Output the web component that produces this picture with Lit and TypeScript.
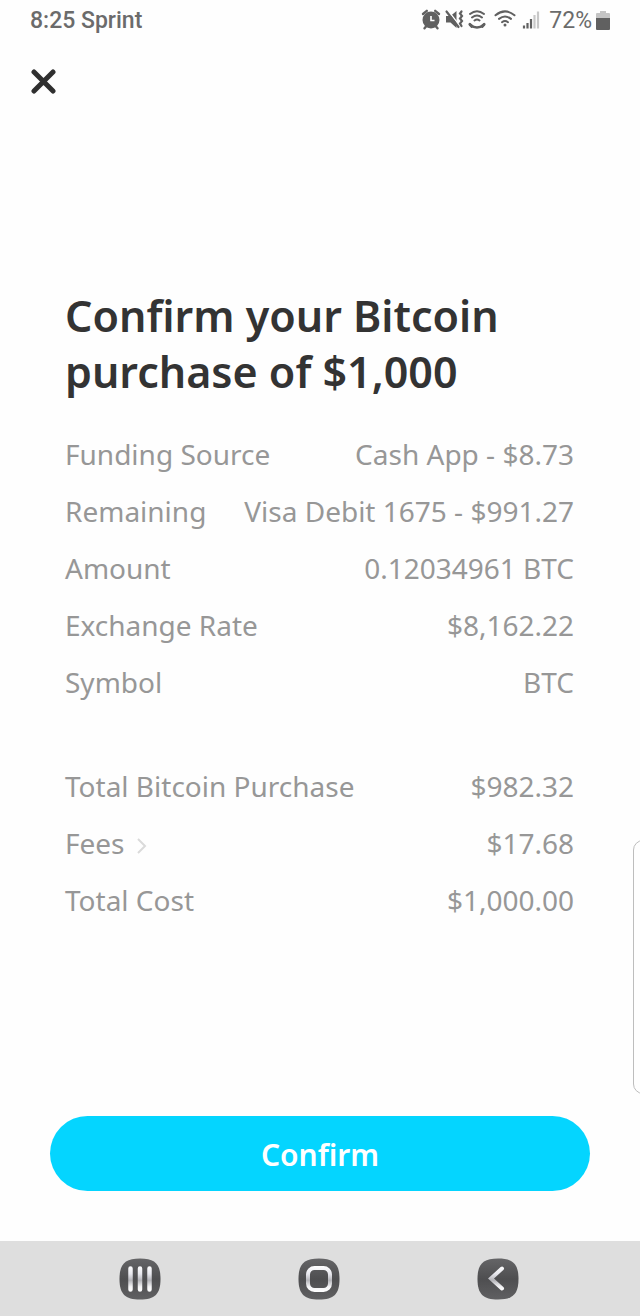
import { LitElement, html, css, svg } from "lit";
import { customElement, property } from "lit/decorators.js";

interface Row {
  label: string;
  value: string;
  link?: boolean;
}

const ORDER_ROWS: Row[] = [
  { label: "Funding Source", value: "Cash App - $8.73" },
  { label: "Remaining", value: "Visa Debit 1675 - $991.27" },
  { label: "Amount", value: "0.12034961 BTC" },
  { label: "Exchange Rate", value: "$8,162.22" },
  { label: "Symbol", value: "BTC" },
];

const TOTAL_ROWS: Row[] = [
  { label: "Total Bitcoin Purchase", value: "$982.32" },
  { label: "Fees", value: "$17.68", link: true },
  { label: "Total Cost", value: "$1,000.00" },
];

@customElement("status-bar")
export class StatusBar extends LitElement {
  static styles = css`
    :host {
      display: flex;
      justify-content: space-between;
      align-items: center;
      height: 41px;
      padding: 0 30px;
      font: 500 23px/27px Roboto, sans-serif;
      color: #6b6b6b;
    }
    .icons {
      display: flex;
      align-items: center;
    }
    .glyphs {
      display: block;
      margin-right: 9px;
    }
    .battery {
      display: block;
      margin-left: 4px;
    }
    .level {
      font-weight: 400;
    }
  `;

  render() {
    return html`
      <span>8:25 Sprint</span>
      <div class="icons">
        <svg class="glyphs" width="120" height="24" viewBox="420 8 120 24" fill="none" stroke="#606060" stroke-width="2" stroke-linecap="round" aria-hidden="true">
          <circle cx="431" cy="19" r="7.500" fill="#606060" />
          <path d="M423 13l3.800-3.200M439 13l-3.800-3.200M426 25.500l-1.500 1.800M436 25.500l1.500 1.800" stroke-width="2.400" />
          <path d="M431 15v4.500h3.500" stroke="#fff" stroke-width="1.600" stroke-linecap="butt" />
          <path d="M446 15h4.500l6-5v17l-6-5.500H446z" fill="#606060" stroke="none" />
          <path d="M448 9.500l11.500 15" stroke="#fff" stroke-width="1.400" />
          <path d="M446.500 10.500l12 15.500" stroke-width="2.200" />
          <path d="M461.500 10.500l-1.500 2 2 2.500-2 2.500 2 2.500-2 2.500 1.500 2.500" stroke-width="2.200" />
          <path d="M470 13q7-5.500 14 0M472 16.500q5-4 10 0M474.500 19.500q2.500-2 5 0" stroke-width="2" />
          <path d="M470.500 24q6.500 5 13 0" stroke-width="2.600" />
          <path d="M469.800 23.300l2 2.200M484.200 23.300l-2 2.200" stroke-width="2.800" />
          <path d="M495.500 14.300q9.500-7.800 19 0M499 17.900q6-4.800 12 0M502 21.200q3-2.300 6 0" />
          <circle cx="505" cy="24" r="1.500" fill="#606060" stroke="none" />
          <g stroke-linecap="butt">
            <path d="M524 24.500v3M527.500 22v5.500M531 18v9.500" stroke-width="2.200" />
            <path d="M534.500 14v13.500M538 10.500v17" stroke="#c8c8c8" stroke-width="2.200" />
          </g>
        </svg>
        <span class="level">72%</span>
        <svg class="battery" width="14" height="20" viewBox="0 0 14 20" aria-hidden="true">
          <path d="M4 0h6v2h3q1 0 1 1v5H0V3q0-1 1-1h3z" fill="#c4c4c4" />
          <path d="M0 7h14v11q0 1-1 1H1q-1 0-1-1z" fill="#606060" />
        </svg>
      </div>
    `;
  }
}

@customElement("detail-list")
export class DetailList extends LitElement {
  @property({ attribute: false }) rows: Row[] = [];

  static styles = css`
    :host {
      display: block;
    }
    .list {
      margin: 0;
      display: grid;
      gap: 21px;
    }
    .row {
      display: flex;
      justify-content: space-between;
      line-height: 36px;
    }
    .value {
      margin: 0;
      text-align: right;
    }
    .more {
      color: inherit;
      text-decoration: none;
    }
    .chevron {
      margin-left: 11px;
    }
  `;

  render() {
    return html`
      <dl class="list">
        ${this.rows.map(
          (row) => html`
            <div class="row">
              <dt>
                ${row.link
                  ? html`<a class="more" href="#fees">${row.label}<svg class="chevron" width="12" height="16" viewBox="0 0 12 16" aria-hidden="true"><path d="M2 1l7 7-7 7" fill="none" stroke="#dadada" stroke-width="2" /></svg></a>`
                  : row.label}
              </dt>
              <dd class="value">${row.value}</dd>
            </div>
          `
        )}
      </dl>
    `;
  }
}

const NAV_ITEMS = [
  {
    label: "Recent apps",
    glyph: svg`<path d="M11.500 10.500v21M21 10.500v21M30.500 10.500v21" stroke="url(#metal)" stroke-width="4.500" stroke-linecap="round" />`,
  },
  {
    label: "Home",
    glyph: svg`<rect x="10" y="10" width="22" height="22" rx="6.500" stroke="url(#metal)" stroke-width="4" />`,
  },
  {
    label: "Back",
    glyph: svg`<path d="M25 10.500L14 20.500l11 10" stroke="url(#metal)" stroke-width="4" stroke-linecap="round" />`,
  },
];

@customElement("nav-bar")
export class NavBar extends LitElement {
  static styles = css`
    :host {
      display: flex;
      justify-content: space-between;
      align-items: center;
      height: 75px;
      padding: 0 121px 0 119px;
      background: #dedede;
    }
    .key {
      padding: 0;
      border: 0;
      background: none;
    }
    .face {
      display: block;
    }
  `;

  render() {
    return NAV_ITEMS.map(
      (item) => html`
        <button class="key" type="button" aria-label=${item.label}>
          <svg class="face" width="42" height="42" viewBox="0 0 42 42" fill="none">
            <defs>
              <linearGradient id="metal" gradientUnits="userSpaceOnUse" x1="0" y1="8" x2="0" y2="34">
                <stop offset="0" stop-color="#fff" />
                <stop offset="0.3" stop-color="#e8e8ee" />
                <stop offset="0.55" stop-color="#b4b4b9" />
                <stop offset="0.8" stop-color="#f4f4f6" />
                <stop offset="1" stop-color="#fff" />
              </linearGradient>
              <linearGradient id="plate" x1="0" y1="0" x2="0" y2="1">
                <stop offset="0" stop-color="#656567" />
                <stop offset="0.5" stop-color="#4e4e50" />
                <stop offset="1" stop-color="#606062" />
              </linearGradient>
            </defs>
            <path d="M21 .5C36 .5 41.500 6 41.500 21S36 41.500 21 41.500.5 36 .5 21 6 .5 21 .5z" fill="url(#plate)" />
            ${item.glyph}
          </svg>
        </button>
      `
    );
  }
}

@customElement("app-root")
export class AppRoot extends LitElement {
  static styles = css`
    :host {
      position: relative;
      display: flex;
      flex-direction: column;
      min-height: 100vh;
      overflow: hidden;
      background: #fefefe;
      font-family: "Noto Sans", sans-serif;
    }
    .close {
      align-self: flex-start;
      margin: 27px 30px 0;
      padding: 0;
      border: 0;
      background: none;
    }
    .cross {
      display: block;
    }
    .content {
      flex: 1;
      display: flex;
      flex-direction: column;
      justify-content: center;
      padding: 0 66px 4px 65px;
      color: #979797;
      font-size: 28px;
    }
    .title {
      margin: 0 0 36px;
      color: #333;
      font-size: 43px;
      line-height: 56px;
      font-weight: 600;
    }
    .totals {
      margin-top: 68px;
    }
    .confirm {
      height: 75px;
      margin: 0 50px 50px;
      padding: 2px 0 0;
      border: 0;
      border-radius: 38px;
      background: #04d5ff;
      color: #fff;
      font: 600 30px/40px "Noto Sans", sans-serif;
    }
    .edge {
      position: absolute;
      right: -13px;
      bottom: 222px;
      width: 18px;
      height: 252px;
      border: 1px solid #bdbdbd;
      border-radius: 10px;
    }
  `;

  render() {
    return html`
      <status-bar></status-bar>
      <button class="close" type="button" aria-label="Close">
        <svg class="cross" width="26" height="26" viewBox="0 0 26 26" aria-hidden="true">
          <path d="M4 4l19 19M23 4L4 23" stroke="#2f2f2f" stroke-width="5" stroke-linecap="round" />
        </svg>
      </button>
      <main class="content">
        <h1 class="title">Confirm your Bitcoin purchase of $1,000</h1>
        <detail-list .rows=${ORDER_ROWS}></detail-list>
        <detail-list class="totals" .rows=${TOTAL_ROWS}></detail-list>
      </main>
      <button class="confirm" type="button">Confirm</button>
      <nav-bar></nav-bar>
      <div class="edge"></div>
    `;
  }
}
